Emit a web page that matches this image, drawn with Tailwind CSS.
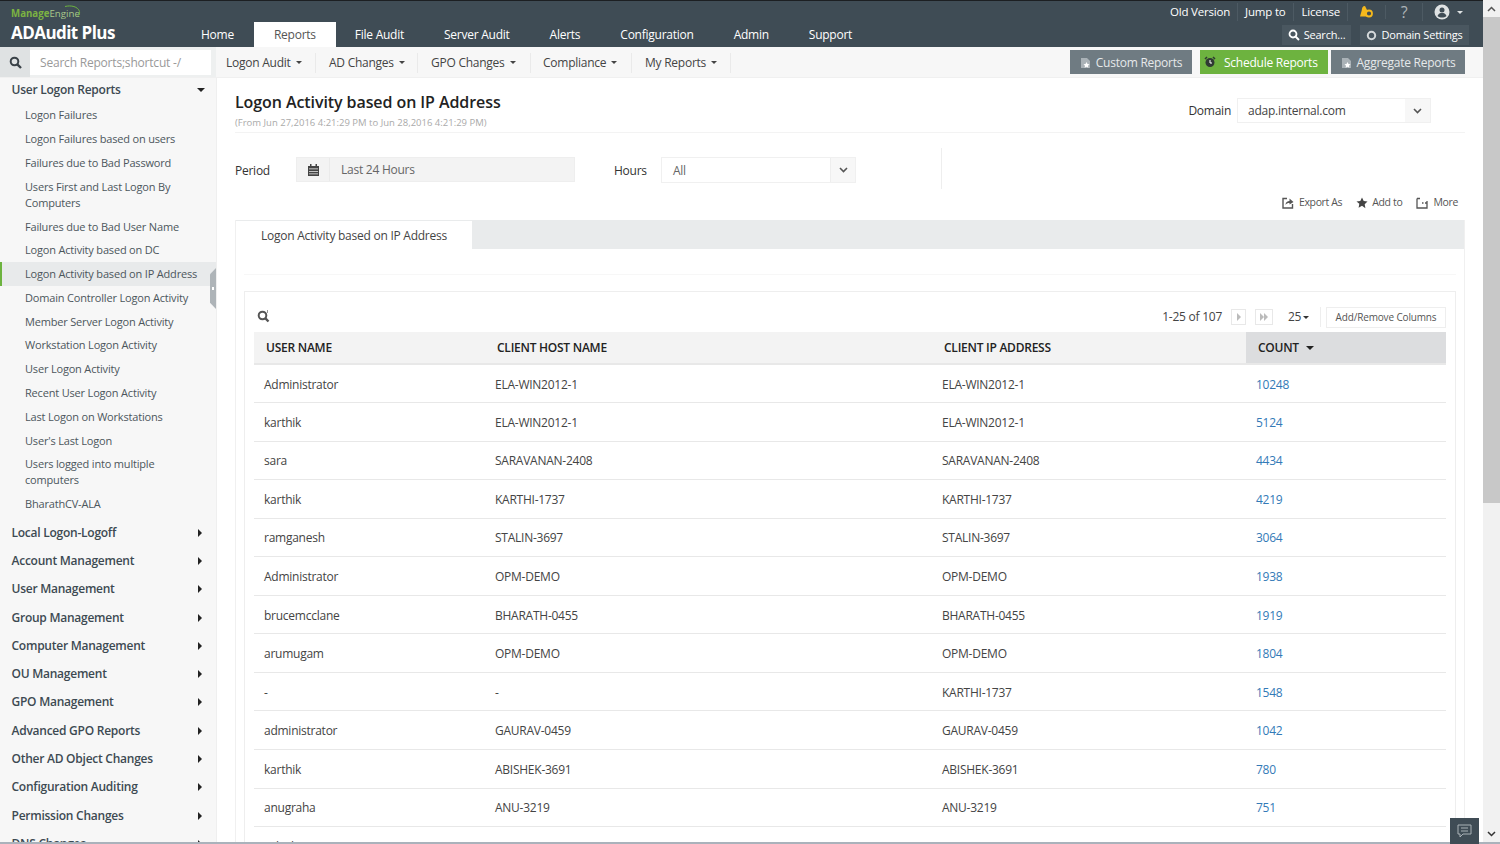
<!DOCTYPE html>
<html lang="en">
<head>
  <meta charset="UTF-8">
  <meta name="viewport" content="width=device-width, initial-scale=1.0">
  <title>ADAudit Plus - Reports</title>
  <script src="https://cdn.jsdelivr.net/npm/@tailwindcss/browser@4"></script>
</head>
<body class="h-[844px] overflow-hidden bg-white font-['Open_Sans',sans-serif] text-[#333]">
<div class="flex h-[842px] overflow-hidden">
  <div class="w-[1483px] shrink-0 flex flex-col">

    <!-- Header -->
    <header class="h-[47px] shrink-0 bg-[#3f4c55] border-t border-[#1c1f22] flex justify-between">
      <div class="flex">
        <div class="relative w-[201px] pl-[11px] pt-[7px]">
          <div class="text-[9.700px] leading-[12px] font-bold text-[#7cb342]">Manage<span class="font-normal text-[#a9c98a]">Engine</span></div>
          <div class="mt-[2px] text-[17px] leading-[22px] font-bold text-white tracking-[-0.55px]">ADAudit Plus</div>
          <svg class="absolute left-[62px] top-[4px]" width="20" height="12" viewBox="0 0 20 12"><path d="M3 1.500c6-1.500 13 0 14.500 5 .5 2-.5 3.500-2 4.500" fill="none" stroke="#6db33f" stroke-width="1"/></svg>
        </div>
        <nav class="flex items-end text-[12px] tracking-[-0.25px] text-white">
          <a class="h-[25px] leading-[26px] mr-[20px]">Home</a>
          <a class="h-[25px] leading-[26px] px-[20px] bg-white text-[#555] mr-[19px]">Reports</a>
          <a class="h-[25px] leading-[26px] mr-[40px]">File Audit</a>
          <a class="h-[25px] leading-[26px] mr-[40px]">Server Audit</a>
          <a class="h-[25px] leading-[26px] mr-[40px]">Alerts</a>
          <a class="h-[25px] leading-[26px] mr-[40px]">Configuration</a>
          <a class="h-[25px] leading-[26px] mr-[40px]">Admin</a>
          <a class="h-[25px] leading-[26px]">Support</a>
        </nav>
      </div>
      <div class="flex flex-col items-end pr-[14px] text-white">
        <div class="h-[22px] flex items-center text-[11.500px] tracking-[-0.2px] whitespace-nowrap pr-[6px]">
          <span class="pr-[7px] border-r border-[#4d5a63]">Old Version</span>
          <span class="px-[7px] border-r border-[#4d5a63]">Jump to</span>
          <span class="pl-[8px] pr-[7px] border-r border-[#4d5a63]">License</span>
          <span class="w-[38px] flex justify-center border-r border-[#4d5a63]">
            <svg width="15" height="14" viewBox="0 0 15 14"><path d="M6 1C3.500 1 3 3 2.700 5.500L1 11.500h7.500l.8-4z" fill="#f5b81c"/><circle cx="10" cy="8.500" r="3" fill="#3f4c55" stroke="#f5b81c" stroke-width="1.800"/></svg>
          </span>
          <span class="w-[37px] text-center text-[16px] leading-[18px] text-[#aeb4b8] border-r border-[#4d5a63]">?</span>
          <span class="w-[40px] flex items-center justify-end gap-[7px]">
            <svg width="16" height="16" viewBox="0 0 16 16"><circle cx="8" cy="8" r="7.500" fill="#dfe2e3"/><circle cx="8" cy="6" r="2.500" fill="#3f4c55"/><path d="M3.500 12c1-2.500 2.500-3 4.500-3s3.500.5 4.500 3c-2.500 2-6.500 2-9 0z" fill="#3f4c55"/></svg>
            <span class="w-0 h-0 border-x-[3px] border-x-transparent border-t-[3px] border-t-[#dfe2e3]"></span>
          </span>
        </div>
        <div class="mt-[2px] flex gap-[9px] text-[11px] tracking-[-0.2px] h-[20px]">
          <span class="w-[69px] bg-[#4a5760] flex items-center justify-center gap-[4px]">
            <svg width="12" height="12" viewBox="0 0 12 12"><circle cx="5" cy="5" r="3.500" fill="none" stroke="#fff" stroke-width="1.800"/><path d="M7.500 7.500l3.500 3.500" stroke="#fff" stroke-width="2"/></svg>Search...
          </span>
          <span class="w-[109px] bg-[#4a5760] flex items-center justify-center gap-[4px]">
            <svg width="11" height="11" viewBox="0 0 11 11"><circle cx="5.500" cy="5.500" r="3.700" fill="none" stroke="#d5d9db" stroke-width="2"/></svg>Domain Settings
          </span>
        </div>
      </div>
    </header>

    <!-- Sub navigation -->
    <div class="h-[31px] shrink-0 bg-[#f7f7f7] border-b border-[#f0f0f0] flex items-center">
      <div class="w-[216px] h-full flex items-center bg-[#eef0f0] pl-0 pr-[5px]">
        <div class="w-[30px] h-full bg-[#dfe2e3] flex items-center justify-center">
          <svg width="13" height="13" viewBox="0 0 13 13"><circle cx="5.500" cy="5.500" r="3.800" fill="none" stroke="#3a4248" stroke-width="2"/><path d="M8.300 8.300l3.700 3.700" stroke="#3a4248" stroke-width="2.400"/></svg>
        </div>
        <div class="w-[181px] h-[25px] bg-white pl-[10px] text-[12px] tracking-[-0.2px] leading-[25px] text-[#999]">Search Reports;shortcut -/</div>
      </div>
      <nav class="flex-1 flex items-center pt-[1px] text-[12px] tracking-[-0.25px] text-[#444]">
        <span class="h-[20px] leading-[20px] pl-[10px] w-[100px] border-r border-[#eaeaea] flex items-center gap-[5px]">Logon Audit <i class="w-0 h-0 border-x-[3px] border-x-transparent border-t-[3px] border-t-[#444]"></i></span>
        <span class="h-[20px] leading-[20px] pl-[13px] w-[102px] border-r border-[#eaeaea] flex items-center gap-[5px]">AD Changes <i class="w-0 h-0 border-x-[3px] border-x-transparent border-t-[3px] border-t-[#444]"></i></span>
        <span class="h-[20px] leading-[20px] pl-[13px] w-[113px] border-r border-[#eaeaea] flex items-center gap-[5px]">GPO Changes <i class="w-0 h-0 border-x-[3px] border-x-transparent border-t-[3px] border-t-[#444]"></i></span>
        <span class="h-[20px] leading-[20px] pl-[12px] w-[101px] border-r border-[#eaeaea] flex items-center gap-[5px]">Compliance <i class="w-0 h-0 border-x-[3px] border-x-transparent border-t-[3px] border-t-[#444]"></i></span>
        <span class="h-[20px] leading-[20px] pl-[13px] w-[99px] border-r border-[#eaeaea] flex items-center gap-[5px]">My Reports <i class="w-0 h-0 border-x-[3px] border-x-transparent border-t-[3px] border-t-[#444]"></i></span>
      </nav>
      <div class="flex items-center text-[12px] tracking-[-0.25px] text-white pr-[18px]">
        <span class="w-[122px] h-[24px] pt-[1px] bg-[#6f7b82] flex items-center justify-center gap-[5px] text-[#e6e9ea]">
          <svg width="11" height="12" viewBox="0 0 11 12"><path d="M1 1h6l3 3v7H1z" fill="#aab2b7"/><path d="M6.500 5l1 2 2 .3-1.500 1.400.4 2-1.900-1-1.900 1 .4-2L3.500 7.300l2-.3z" fill="#fff"/></svg>Custom Reports
        </span>
        <span class="w-[128px] h-[24px] pt-[1px] ml-[8px] pl-[4px] bg-[#6db33f] flex items-center gap-[8px]">
          <svg class="mb-[2px]" width="12" height="12" viewBox="0 0 12 12"><circle cx="6" cy="6.500" r="4.500" fill="#2f3a33"/><path d="M1 3l2-2M11 3L9 1" stroke="#2f3a33" stroke-width="1.500"/><path d="M6 4v3h2" stroke="#fff" fill="none"/></svg>Schedule Reports
        </span>
        <span class="w-[134px] h-[24px] pt-[1px] ml-[3px] bg-[#6f7b82] flex items-center justify-center gap-[5px] text-[#e6e9ea]">
          <svg width="11" height="12" viewBox="0 0 11 12"><path d="M1 1h6l3 3v7H1z" fill="#aab2b7"/><path d="M6.500 5l1 2 2 .3-1.500 1.400.4 2-1.900-1-1.900 1 .4-2L3.500 7.300l2-.3z" fill="#fff"/></svg>Aggregate Reports
        </span>
      </div>
    </div>

    <div class="flex-1 flex min-h-0">
      <!-- Sidebar -->
      <aside class="relative w-[217px] shrink-0 bg-[#f7f7f7] border-r border-[#efefef] overflow-hidden">
        <div class="h-[24px] pl-[11.500px] pr-[11px] flex items-center justify-between text-[12px] tracking-[-0.25px] font-semibold text-[#3d4a52]">
          User Logon Reports
          <i class="w-0 h-0 border-x-[4px] border-x-transparent border-t-[4px] border-t-[#222]"></i>
        </div>
        <ul class="mt-[1.500px] text-[11px] tracking-[-0.18px] leading-[16px] text-[#4c565c]">
          <li class="pl-[25px] py-[3.900px]">Logon Failures</li>
          <li class="pl-[25px] py-[3.900px]">Logon Failures based on users</li>
          <li class="pl-[25px] py-[3.900px]">Failures due to Bad Password</li>
          <li class="pl-[25px] py-[3.900px] pr-[30px]">Users First and Last Logon By Computers</li>
          <li class="pl-[25px] py-[3.900px]">Failures due to Bad User Name</li>
          <li class="pl-[25px] py-[3.900px]">Logon Activity based on DC</li>
          <li class="pl-[23px] py-[3.900px] border-l-2 border-[#6db33f] bg-[#e8eaeb]">Logon Activity based on IP Address</li>
          <li class="pl-[25px] py-[3.900px]">Domain Controller Logon Activity</li>
          <li class="pl-[25px] py-[3.900px]">Member Server Logon Activity</li>
          <li class="pl-[25px] py-[3.900px]">Workstation Logon Activity</li>
          <li class="pl-[25px] py-[3.900px]">User Logon Activity</li>
          <li class="pl-[25px] py-[3.900px]">Recent User Logon Activity</li>
          <li class="pl-[25px] py-[3.900px]">Last Logon on Workstations</li>
          <li class="pl-[25px] py-[3.900px]">User's Last Logon</li>
          <li class="pl-[25px] py-[3.900px] pr-[40px]">Users logged into multiple computers</li>
          <li class="pl-[25px] py-[3.900px]">BharathCV-ALA</li>
        </ul>
        <ul class="mt-[2.500px] text-[12px] tracking-[-0.25px] font-semibold text-[#3d4a52]">
          <li class="h-[28.300px] pl-[11.500px] pr-[14px] flex items-center justify-between">Local Logon-Logoff <i class="w-0 h-0 border-y-[4px] border-y-transparent border-l-[4px] border-l-[#222]"></i></li>
          <li class="h-[28.300px] pl-[11.500px] pr-[14px] flex items-center justify-between">Account Management <i class="w-0 h-0 border-y-[4px] border-y-transparent border-l-[4px] border-l-[#222]"></i></li>
          <li class="h-[28.300px] pl-[11.500px] pr-[14px] flex items-center justify-between">User Management <i class="w-0 h-0 border-y-[4px] border-y-transparent border-l-[4px] border-l-[#222]"></i></li>
          <li class="h-[28.300px] pl-[11.500px] pr-[14px] flex items-center justify-between">Group Management <i class="w-0 h-0 border-y-[4px] border-y-transparent border-l-[4px] border-l-[#222]"></i></li>
          <li class="h-[28.300px] pl-[11.500px] pr-[14px] flex items-center justify-between">Computer Management <i class="w-0 h-0 border-y-[4px] border-y-transparent border-l-[4px] border-l-[#222]"></i></li>
          <li class="h-[28.300px] pl-[11.500px] pr-[14px] flex items-center justify-between">OU Management <i class="w-0 h-0 border-y-[4px] border-y-transparent border-l-[4px] border-l-[#222]"></i></li>
          <li class="h-[28.300px] pl-[11.500px] pr-[14px] flex items-center justify-between">GPO Management <i class="w-0 h-0 border-y-[4px] border-y-transparent border-l-[4px] border-l-[#222]"></i></li>
          <li class="h-[28.300px] pl-[11.500px] pr-[14px] flex items-center justify-between">Advanced GPO Reports <i class="w-0 h-0 border-y-[4px] border-y-transparent border-l-[4px] border-l-[#222]"></i></li>
          <li class="h-[28.300px] pl-[11.500px] pr-[14px] flex items-center justify-between">Other AD Object Changes <i class="w-0 h-0 border-y-[4px] border-y-transparent border-l-[4px] border-l-[#222]"></i></li>
          <li class="h-[28.300px] pl-[11.500px] pr-[14px] flex items-center justify-between">Configuration Auditing <i class="w-0 h-0 border-y-[4px] border-y-transparent border-l-[4px] border-l-[#222]"></i></li>
          <li class="h-[28.300px] pl-[11.500px] pr-[14px] flex items-center justify-between">Permission Changes <i class="w-0 h-0 border-y-[4px] border-y-transparent border-l-[4px] border-l-[#222]"></i></li>
          <li class="h-[28.300px] pl-[11.500px] pr-[14px] flex items-center justify-between">DNS Changes <i class="w-0 h-0 border-y-[4px] border-y-transparent border-l-[4px] border-l-[#222]"></i></li>
        </ul>
        <!-- collapse handle -->
        <div class="absolute right-0 top-[190px] w-[6px] h-[41px] bg-[#aeb4b8] [clip-path:polygon(100%_0,100%_100%,0_85%,0_15%)] flex items-center justify-center">
          <span class="w-[2px] h-[3px] bg-white"></span>
        </div>
      </aside>

      <!-- Main -->
      <main class="flex-1 min-w-0 pl-[18px] pr-[18px] overflow-hidden">
        <div class="h-[55px] flex justify-between border-b border-[#f3f3f3]">
          <div class="pt-[14px]">
            <h1 class="text-[16px] leading-[20px] font-semibold text-[#222] tracking-[-0.08px]">Logon Activity based on IP Address</h1>
            <p class="text-[9.500px] leading-[14px] mt-[4px] text-[#aaa]">(From Jun 27,2016 4:21:29 PM to Jun 28,2016 4:21:29 PM)</p>
          </div>
          <div class="flex items-start pt-[20px] pr-[34px] text-[12px] tracking-[-0.25px]">
            <span class="leading-[25px] mr-[6px]">Domain</span>
            <div class="w-[194px] h-[25px] border border-[#f0f0f0] flex justify-between">
              <span class="pl-[10px] leading-[23px] text-[#444]">adap.internal.com</span>
              <span class="w-[25px] bg-[#f7f7f7] flex items-center justify-center">
                <svg width="9" height="6" viewBox="0 0 9 6"><path d="M1 1l3.500 3.500L8 1" fill="none" stroke="#555" stroke-width="1.600"/></svg>
              </span>
            </div>
          </div>
        </div>

        <div class="h-[56px] flex items-start relative text-[12px] tracking-[-0.25px]">
          <span class="mt-[25px] leading-[25px] w-[61px]">Period</span>
          <div class="mt-[24px] w-[279px] h-[25px] bg-[#f3f3f3] border border-[#eeeeee] flex items-center text-[#666]">
            <span class="w-[33px] h-full flex items-center justify-center border-r border-[#eaeaea]">
              <svg width="11" height="12" viewBox="0 0 11 12"><path d="M0 2h11v10H0z" fill="#444"/><path d="M2 0h1.500v3H2zM7.500 0H9v3H7.500z" fill="#444"/><path d="M1 4.500h9v.8H1zM1 7h9v.8H1zM1 9.500h9v.8H1z" fill="#eee"/></svg>
            </span>
            <span class="pl-[11px] pt-[1px]">Last 24 Hours</span>
          </div>
          <span class="mt-[25px] ml-[39px] leading-[25px] w-[47px]">Hours</span>
          <div class="mt-[24px] w-[195px] h-[26px] border border-[#f0f0f0] flex justify-between">
            <span class="pl-[11px] leading-[26px] text-[#666]">All</span>
            <span class="w-[25px] bg-[#f7f7f7] border-l border-[#eeeeee] flex items-center justify-center">
              <svg width="9" height="6" viewBox="0 0 9 6"><path d="M1 1l3.500 3.500L8 1" fill="none" stroke="#555" stroke-width="1.600"/></svg>
            </span>
          </div>
          <div class="ml-[85px] mt-[15px] h-[41px] border-l border-[#eeeeee]"></div>
        </div>

        <div class="h-[28px] flex items-center justify-end gap-[14px] pr-[7px] text-[10.500px] tracking-[-0.35px] text-[#555]">
          <span class="flex items-center gap-[5px]">
            <svg width="12" height="12" viewBox="0 0 12 12"><path d="M5 1.500H1v9.500h9.500V7" fill="none" stroke="#555" stroke-width="1.400"/><path d="M3.500 8c0-3 2-4 4-4V1.500L11.500 5 7.500 7.500V6c-2 0-3 .5-4 2z" fill="#555"/></svg>Export As
          </span>
          <span class="flex items-center gap-[4px]">
            <svg width="12" height="12" viewBox="0 0 12 12"><path d="M6 .5l1.700 3.600 3.800.5-2.800 2.700.7 3.900L6 8.800l-3.400 1.900.7-3.900L.5 4.600l3.800-.5z" fill="#444"/></svg>Add to
          </span>
          <span class="flex items-center gap-[5px]">
            <svg width="12" height="12" viewBox="0 0 12 12"><path d="M1 1.500h3M1 1.500V11h10V4M6 6h1.500M9 6h1.500" fill="none" stroke="#555" stroke-width="1.300"/></svg>More
          </span>
        </div>

        <!-- Tab panel -->
        <div class="mt-[3px] border-x border-[#f0f0f0] h-[700px]">
          <div class="h-[29px] bg-[#e9ebec]">
            <div class="w-[236px] h-full bg-white border-t border-[#e9ebec] pl-[25px] text-[12px] tracking-[-0.25px] leading-[29px] text-[#444]">Logon Activity based on IP Address</div>
          </div>
          <div class="mx-[8px] h-[42px] pt-[25px]"><div class="border-t border-[#f7f7f7]"></div></div>

          <!-- Report card -->
          <div class="mx-[8px] border border-[#eeeeee] px-[9px] h-[640px]">
            <div class="h-[40px] flex items-center justify-between">
              <svg class="ml-[3px] mt-[7px]" width="14" height="14" viewBox="0 0 14 14"><circle cx="5.500" cy="6.500" r="3.800" fill="none" stroke="#555" stroke-width="2"/><path d="M8.200 9.200l3.300 3.300" stroke="#555" stroke-width="2.400"/><path d="M10.500 1v3" stroke="#999"/></svg>
              <div class="flex items-center mt-[10px] text-[12px] tracking-[-0.25px] text-[#444]">
                <span>1-25 of 107</span>
                <span class="ml-[9px] w-[15px] h-[16px] border border-[#e8e8e8] flex items-center justify-center"><i class="w-0 h-0 border-y-[4px] border-y-transparent border-l-[4px] border-l-[#bbb]"></i></span>
                <span class="ml-[9px] w-[18px] h-[16px] border border-[#e8e8e8] flex items-center justify-center"><i class="w-0 h-0 border-y-[4px] border-y-transparent border-l-[4px] border-l-[#bbb]"></i><i class="w-0 h-0 border-y-[4px] border-y-transparent border-l-[4px] border-l-[#bbb]"></i></span>
                <span class="ml-[10px] pl-[5px] w-[38px] h-[20px] border-r border-[#eeeeee] flex items-center gap-[2px]">25 <i class="w-0 h-0 border-x-[3px] border-x-transparent border-t-[3px] border-t-[#333]"></i></span>
                <span class="ml-[5px] w-[120px] h-[21px] border border-[#eeeeee] text-center text-[10px] tracking-[-0.15px] leading-[19px] text-[#555]">Add/Remove Columns</span>
              </div>
            </div>
            <table class="w-[1192px] table-fixed text-[12px] tracking-[-0.25px] text-[#444]">
              <colgroup><col class="w-[231px]"><col class="w-[447px]"><col class="w-[314px]"><col class="w-[200px]"></colgroup>
              <thead>
                <tr class="h-[32px] bg-[#f3f3f3] border-b-2 border-[#e8e8e8] text-left text-[#222]">
                  <th class="pl-[12px] font-semibold">USER NAME</th>
                  <th class="pl-[12px] font-semibold">CLIENT HOST NAME</th>
                  <th class="pl-[12px] font-semibold">CLIENT IP ADDRESS</th>
                  <th class="pl-[12px] font-semibold bg-[#dcdddf]">COUNT <i class="inline-block ml-[4px] mb-[2px] w-0 h-0 border-x-[4px] border-x-transparent border-t-[4px] border-t-[#222]"></i></th>
                </tr>
              </thead>
              <tbody class="[&_td]:pt-[2px]">
                <tr class="h-[38.550px] border-b border-[#e8e8e8]"><td class="pl-[10px]">Administrator</td><td class="pl-[10px]">ELA-WIN2012-1</td><td class="pl-[10px]">ELA-WIN2012-1</td><td class="pl-[10px] text-[#337ab7]">10248</td></tr>
                <tr class="h-[38.550px] border-b border-[#e8e8e8]"><td class="pl-[10px]">karthik</td><td class="pl-[10px]">ELA-WIN2012-1</td><td class="pl-[10px]">ELA-WIN2012-1</td><td class="pl-[10px] text-[#337ab7]">5124</td></tr>
                <tr class="h-[38.550px] border-b border-[#e8e8e8]"><td class="pl-[10px]">sara</td><td class="pl-[10px]">SARAVANAN-2408</td><td class="pl-[10px]">SARAVANAN-2408</td><td class="pl-[10px] text-[#337ab7]">4434</td></tr>
                <tr class="h-[38.550px] border-b border-[#e8e8e8]"><td class="pl-[10px]">karthik</td><td class="pl-[10px]">KARTHI-1737</td><td class="pl-[10px]">KARTHI-1737</td><td class="pl-[10px] text-[#337ab7]">4219</td></tr>
                <tr class="h-[38.550px] border-b border-[#e8e8e8]"><td class="pl-[10px]">ramganesh</td><td class="pl-[10px]">STALIN-3697</td><td class="pl-[10px]">STALIN-3697</td><td class="pl-[10px] text-[#337ab7]">3064</td></tr>
                <tr class="h-[38.550px] border-b border-[#e8e8e8]"><td class="pl-[10px]">Administrator</td><td class="pl-[10px]">OPM-DEMO</td><td class="pl-[10px]">OPM-DEMO</td><td class="pl-[10px] text-[#337ab7]">1938</td></tr>
                <tr class="h-[38.550px] border-b border-[#e8e8e8]"><td class="pl-[10px]">brucemcclane</td><td class="pl-[10px]">BHARATH-0455</td><td class="pl-[10px]">BHARATH-0455</td><td class="pl-[10px] text-[#337ab7]">1919</td></tr>
                <tr class="h-[38.550px] border-b border-[#e8e8e8]"><td class="pl-[10px]">arumugam</td><td class="pl-[10px]">OPM-DEMO</td><td class="pl-[10px]">OPM-DEMO</td><td class="pl-[10px] text-[#337ab7]">1804</td></tr>
                <tr class="h-[38.550px] border-b border-[#e8e8e8]"><td class="pl-[10px]">-</td><td class="pl-[10px]">-</td><td class="pl-[10px]">KARTHI-1737</td><td class="pl-[10px] text-[#337ab7]">1548</td></tr>
                <tr class="h-[38.550px] border-b border-[#e8e8e8]"><td class="pl-[10px]">administrator</td><td class="pl-[10px]">GAURAV-0459</td><td class="pl-[10px]">GAURAV-0459</td><td class="pl-[10px] text-[#337ab7]">1042</td></tr>
                <tr class="h-[38.550px] border-b border-[#e8e8e8]"><td class="pl-[10px]">karthik</td><td class="pl-[10px]">ABISHEK-3691</td><td class="pl-[10px]">ABISHEK-3691</td><td class="pl-[10px] text-[#337ab7]">780</td></tr>
                <tr class="h-[38.550px] border-b border-[#e8e8e8]"><td class="pl-[10px]">anugraha</td><td class="pl-[10px]">ANU-3219</td><td class="pl-[10px]">ANU-3219</td><td class="pl-[10px] text-[#337ab7]">751</td></tr>
                <tr class="h-[38.550px] border-b border-[#e8e8e8]"><td class="pl-[10px]">selvakumar</td><td class="pl-[10px]">PALANI-2498</td><td class="pl-[10px]">PALANI-2498</td><td class="pl-[10px] text-[#337ab7]">749</td></tr>
              </tbody>
            </table>
          </div>
        </div>
      </main>
    </div>
  </div>

  <!-- Scrollbar -->
  <div class="w-[17px] shrink-0 bg-[#f1f1f1] flex flex-col items-center">
    <div class="h-[17px] w-full flex items-center justify-center">
      <svg width="9" height="6" viewBox="0 0 9 6"><path d="M1 5l3.500-3.500L8 5" fill="none" stroke="#555" stroke-width="1.500"/></svg>
    </div>
    <div class="h-[486px] w-full bg-[#c8c8c8]"></div>
    <div class="flex-1"></div>
    <div class="h-[17px] w-full flex items-center justify-center">
      <svg width="9" height="6" viewBox="0 0 9 6"><path d="M1 1l3.500 3.500L8 1" fill="none" stroke="#333" stroke-width="1.500"/></svg>
    </div>
  </div>
</div>
<div class="h-[2px] bg-[#aab2bb]"></div>

<!-- Feedback button -->
<div class="fixed left-[1450px] top-[818px] w-[29px] h-[26px] bg-[#3f4c55] flex items-center justify-center">
  <svg width="15" height="14" viewBox="0 0 15 14"><path d="M1 1h13v9H6l-3 3v-3H1z" fill="none" stroke="#aab2b7"/><path d="M4 4h7M4 7h7" stroke="#aab2b7"/></svg>
</div>
</body>
</html>
